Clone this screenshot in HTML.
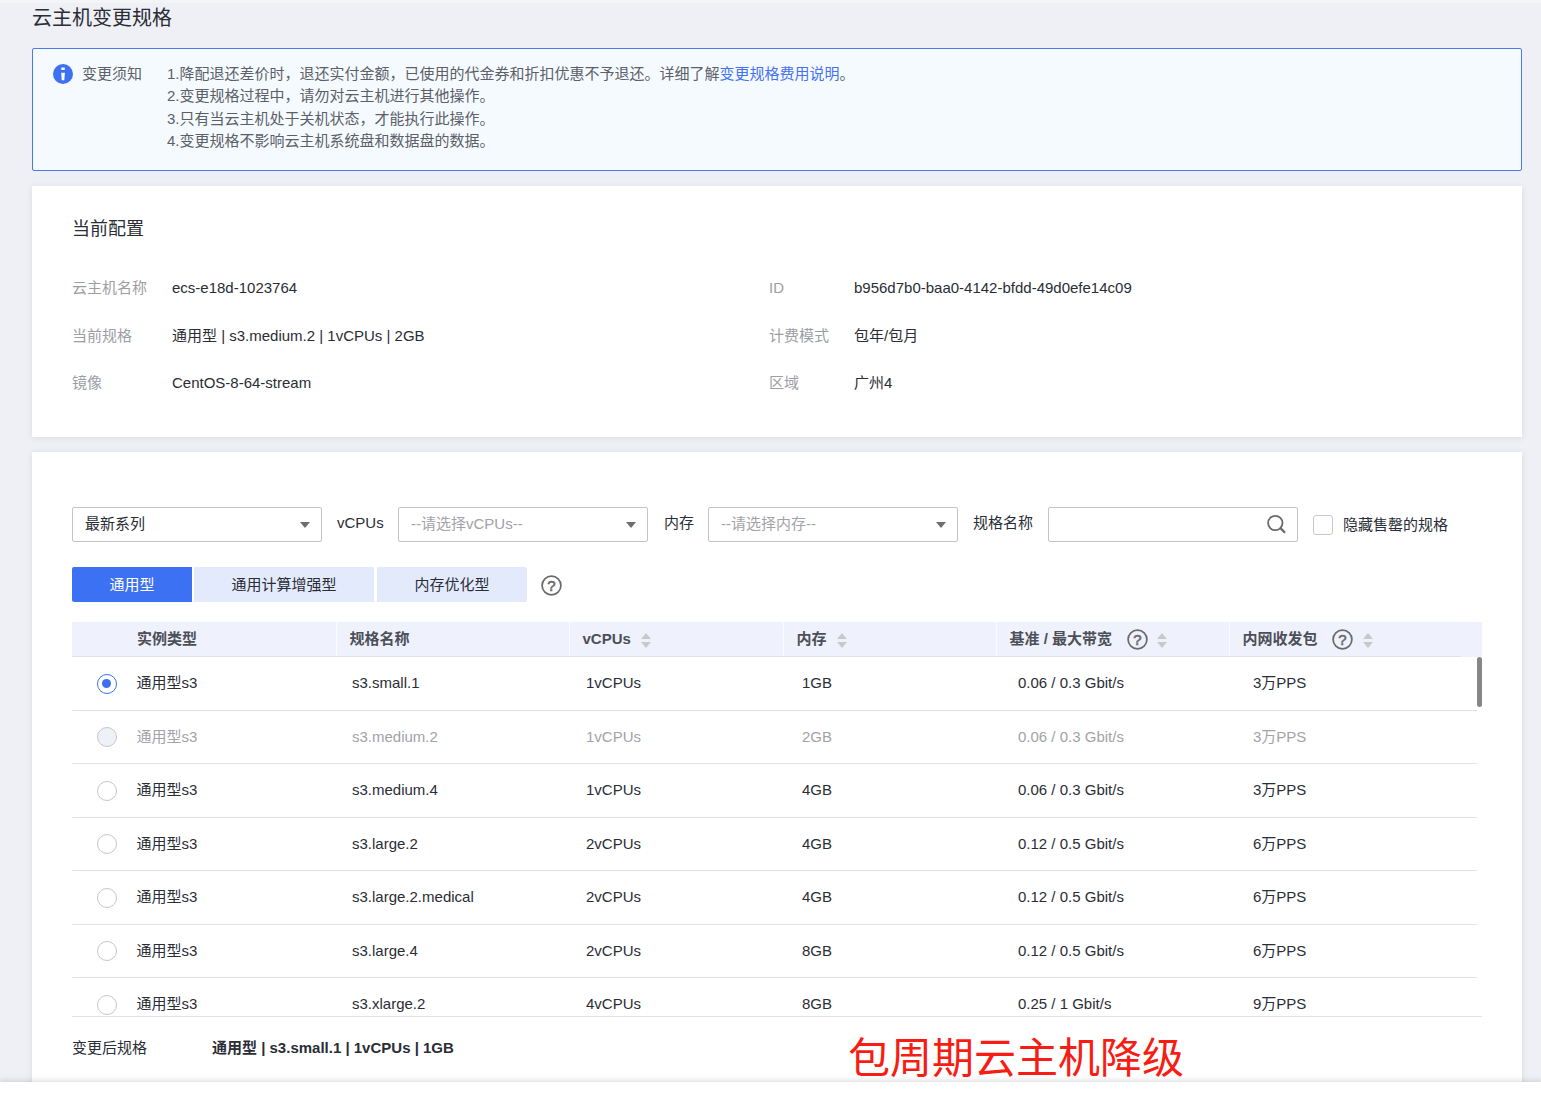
<!DOCTYPE html>
<html lang="zh-CN">
<head>
<meta charset="utf-8">
<title>云主机变更规格</title>
<style>
*{box-sizing:border-box;margin:0;padding:0}
html,body{width:1541px;height:1097px;overflow:hidden}
body{position:relative;background:#eff0f5;font-family:"Liberation Sans","Noto Sans CJK SC",sans-serif;font-size:15px;color:#2a2d36}
.topstrip{position:absolute;left:0;top:0;width:1541px;height:3px;background:#f3f4f6}
h1{position:absolute;left:32px;top:4px;font-size:20px;font-weight:400;line-height:28px;color:#2a2d36}
.notice{position:absolute;left:32px;top:48px;width:1490px;height:123px;border:1px solid #4a78ee;border-radius:2px;background:#f5faff}
.notice .ico{position:absolute;left:20px;top:15px;width:20px;height:20px}
.notice .ttl{position:absolute;left:49px;top:14.3px;line-height:22px;color:#5c5f68}
.notice ol{position:absolute;left:134px;top:14px;list-style:none;color:#5c5f68;line-height:22.4px}
.notice a{color:#4672f0;text-decoration:none}
.card{position:absolute;left:32px;width:1490px;background:#fff;box-shadow:0 1px 7px rgba(0,0,0,.09)}
.c1{top:186px;height:251px}
.c2{top:452px;height:640px}
.c1 h2{position:absolute;left:40px;top:30px;font-size:18px;font-weight:400;line-height:26px;color:#2a2d36}
.kv{position:absolute;line-height:20px;white-space:nowrap}
.kv .k{position:absolute;left:0;top:0;color:#9c9ea5}
.kv .v{position:absolute;top:0;color:#2a2d36}

.sel{position:absolute;top:55px;width:250px;height:35px;border:1px solid #c4c4c4;border-radius:2px;background:#fff;line-height:31px;padding-left:12px;color:#2a2d36;white-space:nowrap}
.sel.ph{color:#a2a3a8}
.sel:after{content:"";position:absolute;right:11px;top:13.5px;border:5px solid transparent;border-top:6px solid #6e6e6e;border-bottom:0}
.sel.noarrow:after{display:none}
.flabel{position:absolute;top:60px;line-height:22px;white-space:nowrap;color:#2a2d36}
.chk{position:absolute;left:1281px;top:63px;width:20px;height:20px;border:1px solid #c8c8c8;border-radius:3px;background:#fff}
.tab{position:absolute;top:115px;height:35px;line-height:35px;text-align:center;background:#e3eafc;color:#2a2d36;white-space:nowrap}
.tab.on{background:#3d71f3;color:#fff;border-radius:2px 0 0 2px}
.help{position:absolute;width:21px;height:21px;font-weight:400}
.thead{position:absolute;left:40px;top:170px;width:1410px;height:35px;background:#eff2fc}
.thead:after{content:"";position:absolute;left:0;bottom:0;width:1389px;height:1px;background:#dfe1ec}
.thead .th{position:absolute;top:0;height:34px;display:flex;align-items:center;line-height:20px;font-weight:700;color:#4c4f58;white-space:nowrap;border-left:1px solid rgba(255,255,255,.65);padding-left:13.5px}
.thead .th:first-child{border-left:0}
.sort{display:block;position:relative;width:10px;height:16px;margin-left:9.5px;top:.5px}
.sort:before{content:"";position:absolute;left:0;top:1px;border:5px solid transparent;border-bottom:6px solid #c9c9c9;border-top:0}
.sort:after{content:"";position:absolute;left:0;top:10px;border:5px solid transparent;border-top:6px solid #c9c9c9;border-bottom:0}
.thead .help{position:relative;display:block;flex:none;top:0;margin-left:13.5px}
.thead .th b{font-weight:700;position:relative;top:-.5px;left:-1px}
.tbody{position:absolute;left:40px;top:205px;width:1410px;height:360px;overflow:hidden;border-bottom:1px solid #dfe2ec}
.tr{position:relative;height:53.5px;width:1405px;border-bottom:1px solid #dfe2ec}
.tr span{position:absolute;top:0;line-height:52px;white-space:nowrap}
.tr.dis span{color:#a2a3a8}
.tr i{position:absolute;left:24.5px;top:16.5px;width:20px;height:20px;border:1px solid #c6c6c9;border-radius:50%;background:#fff}
.tr.dis i{background:#eff1f8}
.tr.sel1 i{border-color:#3d6ff0}
.tr.sel1 i:after{content:"";position:absolute;left:4.5px;top:4.5px;width:9px;height:9px;border-radius:50%;background:#3d6ff0}
.c1x{left:64.5px}.c2x{left:280px}.c3x{left:514px}.c4x{left:730px}.c5x{left:946px}.c6x{left:1181px}
.scroll{position:absolute;left:1445px;top:205px;width:5px;height:50px;border-radius:3px;background:#868686}
.after{position:absolute;left:40px;top:585px;line-height:22px;white-space:nowrap}
.after b{position:absolute;left:140px;top:0;font-weight:700}
.red{position:absolute;left:848px;top:1028.5px;font-size:42px;line-height:60px;color:#f81d14;white-space:nowrap}
.foot{position:absolute;left:0;top:1082px;width:1541px;height:15px;background:#fff;box-shadow:0 -2px 5px rgba(0,0,0,.12)}
</style>
</head>
<body>
<div class="topstrip"></div>
<h1>云主机变更规格</h1>

<div class="notice">
  <svg class="ico" viewBox="0 0 20 20"><circle cx="10" cy="10" r="10" fill="#3e71f2"/><rect x="8.3" y="3.4" width="3.5" height="2.7" rx=".3" fill="#fff"/><path d="M8.2 8.7 H11.9 L11.3 16.3 H8.7 Z" fill="#fff"/></svg>
  <span class="ttl">变更须知</span>
  <ol>
    <li>1.降配退还差价时，退还实付金额，已使用的代金券和折扣优惠不予退还。详细了解<a>变更规格费用说明</a>。</li>
    <li>2.变更规格过程中，请勿对云主机进行其他操作。</li>
    <li>3.只有当云主机处于关机状态，才能执行此操作。</li>
    <li>4.变更规格不影响云主机系统盘和数据盘的数据。</li>
  </ol>
</div>

<div class="card c1">
  <h2>当前配置</h2>
  <div class="kv" style="left:40px;top:92px"><span class="k">云主机名称</span><span class="v" style="left:100px">ecs-e18d-1023764</span></div>
  <div class="kv" style="left:40px;top:140px"><span class="k">当前规格</span><span class="v" style="left:100px">通用型 | s3.medium.2 | 1vCPUs | 2GB</span></div>
  <div class="kv" style="left:40px;top:187px"><span class="k">镜像</span><span class="v" style="left:100px">CentOS-8-64-stream</span></div>
  <div class="kv" style="left:737px;top:92px"><span class="k">ID</span><span class="v" style="left:85px">b956d7b0-baa0-4142-bfdd-49d0efe14c09</span></div>
  <div class="kv" style="left:737px;top:140px"><span class="k">计费模式</span><span class="v" style="left:85px">包年/包月</span></div>
  <div class="kv" style="left:737px;top:187px"><span class="k">区域</span><span class="v" style="left:85px">广州4</span></div>
</div>

<div class="card c2">

  <div class="sel" style="left:40px">最新系列</div>
  <span class="flabel" style="left:305px">vCPUs</span>
  <div class="sel ph" style="left:366px">--请选择vCPUs--</div>
  <span class="flabel" style="left:632px">内存</span>
  <div class="sel ph" style="left:676px">--请选择内存--</div>
  <span class="flabel" style="left:941px">规格名称</span>
  <div class="sel noarrow" style="left:1016px"></div>
  <svg style="position:absolute;left:1233px;top:60px;width:22px;height:22px" viewBox="0 0 22 22"><circle cx="10.3" cy="11" r="7.2" fill="none" stroke="#6b6b6b" stroke-width="1.8"/><path d="M15.7 16.4 L19.4 20.1" stroke="#6b6b6b" stroke-width="2.2" stroke-linecap="round"/></svg>
  <div class="chk"></div>
  <span class="flabel" style="left:1311px;top:62px">隐藏售罄的规格</span>

  <div class="tab on" style="left:40px;width:120px">通用型</div>
  <div class="tab" style="left:162px;width:180px">通用计算增强型</div>
  <div class="tab" style="left:345px;width:150px;border-radius:0 2px 2px 0">内存优化型</div>
  <svg class="help" viewBox="0 0 21 21" style="left:509px;top:122.7px"><circle cx="10.5" cy="10.5" r="9.4" fill="none" stroke="#6b6b6b" stroke-width="1.75"/><text x="10.5" y="15.8" text-anchor="middle" font-family="Liberation Sans,sans-serif" font-size="15" font-weight="400" fill="#6b6b6b" stroke="#6b6b6b" stroke-width=".6">?</text></svg>

  <div class="thead">
    <div class="th" style="left:0;width:265px;padding-left:66px"><b>实例类型</b></div>
    <div class="th" style="left:264px;width:233px"><b>规格名称</b></div>
    <div class="th" style="left:497px;width:214px"><b>vCPUs</b><span class="sort"></span></div>
    <div class="th" style="left:711px;width:213px"><b>内存</b><span class="sort"></span></div>
    <div class="th" style="left:924px;width:233px"><b>基准 / 最大带宽</b><svg class="help" viewBox="0 0 21 21"><circle cx="10.5" cy="10.5" r="9.4" fill="none" stroke="#6b6b6b" stroke-width="1.75"/><text x="10.5" y="15.8" text-anchor="middle" font-family="Liberation Sans,sans-serif" font-size="15" font-weight="400" fill="#6b6b6b" stroke="#6b6b6b" stroke-width=".6">?</text></svg><span class="sort"></span></div>
    <div class="th" style="left:1157px;width:253px"><b>内网收发包</b><svg class="help" viewBox="0 0 21 21"><circle cx="10.5" cy="10.5" r="9.4" fill="none" stroke="#6b6b6b" stroke-width="1.75"/><text x="10.5" y="15.8" text-anchor="middle" font-family="Liberation Sans,sans-serif" font-size="15" font-weight="400" fill="#6b6b6b" stroke="#6b6b6b" stroke-width=".6">?</text></svg><span class="sort"></span></div>
  </div>
  <div class="tbody">
    <div class="tr sel1"><i></i><span class="c1x">通用型s3</span><span class="c2x">s3.small.1</span><span class="c3x">1vCPUs</span><span class="c4x">1GB</span><span class="c5x">0.06 / 0.3 Gbit/s</span><span class="c6x">3万PPS</span></div>
    <div class="tr dis"><i></i><span class="c1x">通用型s3</span><span class="c2x">s3.medium.2</span><span class="c3x">1vCPUs</span><span class="c4x">2GB</span><span class="c5x">0.06 / 0.3 Gbit/s</span><span class="c6x">3万PPS</span></div>
    <div class="tr "><i></i><span class="c1x">通用型s3</span><span class="c2x">s3.medium.4</span><span class="c3x">1vCPUs</span><span class="c4x">4GB</span><span class="c5x">0.06 / 0.3 Gbit/s</span><span class="c6x">3万PPS</span></div>
    <div class="tr "><i></i><span class="c1x">通用型s3</span><span class="c2x">s3.large.2</span><span class="c3x">2vCPUs</span><span class="c4x">4GB</span><span class="c5x">0.12 / 0.5 Gbit/s</span><span class="c6x">6万PPS</span></div>
    <div class="tr "><i></i><span class="c1x">通用型s3</span><span class="c2x">s3.large.2.medical</span><span class="c3x">2vCPUs</span><span class="c4x">4GB</span><span class="c5x">0.12 / 0.5 Gbit/s</span><span class="c6x">6万PPS</span></div>
    <div class="tr "><i></i><span class="c1x">通用型s3</span><span class="c2x">s3.large.4</span><span class="c3x">2vCPUs</span><span class="c4x">8GB</span><span class="c5x">0.12 / 0.5 Gbit/s</span><span class="c6x">6万PPS</span></div>
    <div class="tr "><i></i><span class="c1x">通用型s3</span><span class="c2x">s3.xlarge.2</span><span class="c3x">4vCPUs</span><span class="c4x">8GB</span><span class="c5x">0.25 / 1 Gbit/s</span><span class="c6x">9万PPS</span></div>
  </div>
  <div class="scroll"></div>
  <div class="after">变更后规格<b>通用型 | s3.small.1 | 1vCPUs | 1GB</b></div>

</div>
<div class="foot"></div>
<div class="red">包周期云主机降级</div>
</body>
</html>
